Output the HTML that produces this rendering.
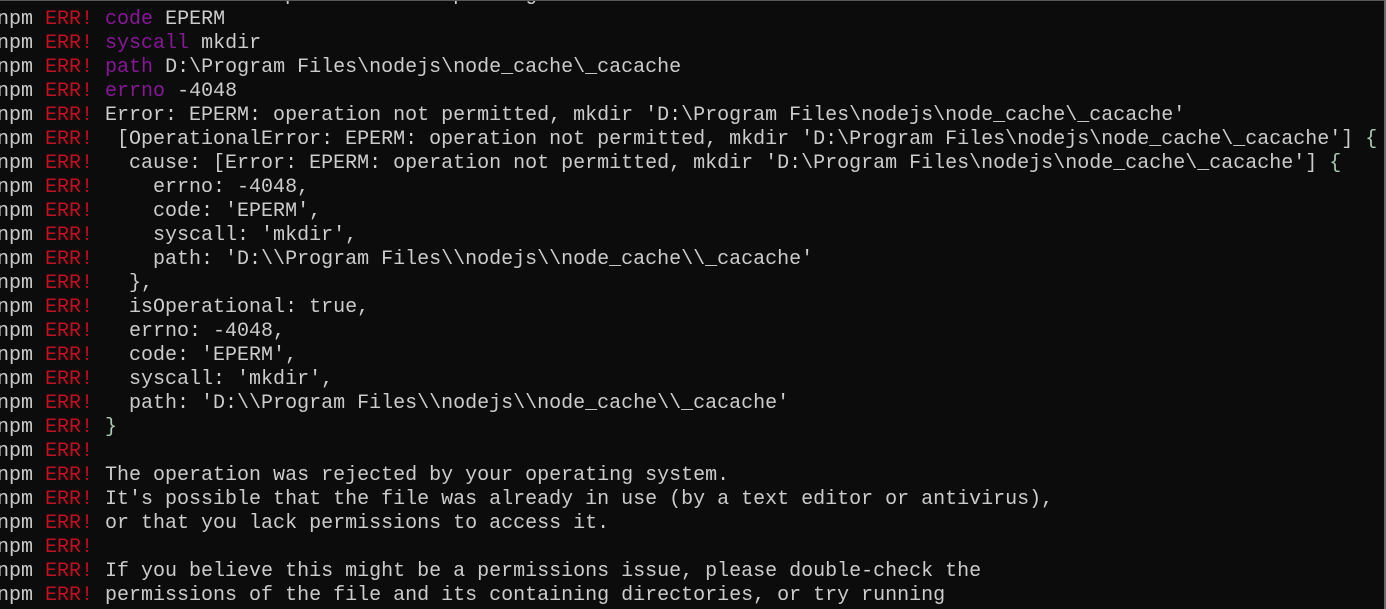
<!DOCTYPE html>
<html><head><meta charset="utf-8"><style>
html,body{margin:0;padding:0;background:#0c0c0c;width:1386px;height:609px;overflow:hidden}
body{position:relative}
pre{margin:0;position:absolute;left:-3px;top:-16px;font-family:"Liberation Mono",monospace;font-size:20px;line-height:24px;color:#cccccc;white-space:pre}
.r{color:#c50f1f}.p{color:#881798}.g{color:#a8cbb4}
.bt{position:absolute;left:0;top:0;width:1386px;height:1px;background:#5a5a5a}
.br{position:absolute;right:0;top:0;width:2px;height:609px;background:#6a6a6a}
</style></head><body><pre>C:\Users\Administrator&gt;npm install webpack -g
npm <span class="r">ERR!</span> <span class="p">code</span> EPERM
npm <span class="r">ERR!</span> <span class="p">syscall</span> mkdir
npm <span class="r">ERR!</span> <span class="p">path</span> D:\Program Files\nodejs\node_cache\_cacache
npm <span class="r">ERR!</span> <span class="p">errno</span> -4048
npm <span class="r">ERR!</span> Error: EPERM: operation not permitted, mkdir 'D:\Program Files\nodejs\node_cache\_cacache'
npm <span class="r">ERR!</span>  [OperationalError: EPERM: operation not permitted, mkdir 'D:\Program Files\nodejs\node_cache\_cacache'] <span class="g">{</span>
npm <span class="r">ERR!</span>   cause: [Error: EPERM: operation not permitted, mkdir 'D:\Program Files\nodejs\node_cache\_cacache'] <span class="g">{</span>
npm <span class="r">ERR!</span>     errno: -4048,
npm <span class="r">ERR!</span>     code: 'EPERM',
npm <span class="r">ERR!</span>     syscall: 'mkdir',
npm <span class="r">ERR!</span>     path: 'D:\\Program Files\\nodejs\\node_cache\\_cacache'
npm <span class="r">ERR!</span>   },
npm <span class="r">ERR!</span>   isOperational: true,
npm <span class="r">ERR!</span>   errno: -4048,
npm <span class="r">ERR!</span>   code: 'EPERM',
npm <span class="r">ERR!</span>   syscall: 'mkdir',
npm <span class="r">ERR!</span>   path: 'D:\\Program Files\\nodejs\\node_cache\\_cacache'
npm <span class="r">ERR!</span> <span class="g">}</span>
npm <span class="r">ERR!</span>
npm <span class="r">ERR!</span> The operation was rejected by your operating system.
npm <span class="r">ERR!</span> It's possible that the file was already in use (by a text editor or antivirus),
npm <span class="r">ERR!</span> or that you lack permissions to access it.
npm <span class="r">ERR!</span>
npm <span class="r">ERR!</span> If you believe this might be a permissions issue, please double-check the
npm <span class="r">ERR!</span> permissions of the file and its containing directories, or try running
npm <span class="r">ERR!</span> the command again as root/Administrator.
</pre><div class="bt"></div><div class="br"></div></body></html>
